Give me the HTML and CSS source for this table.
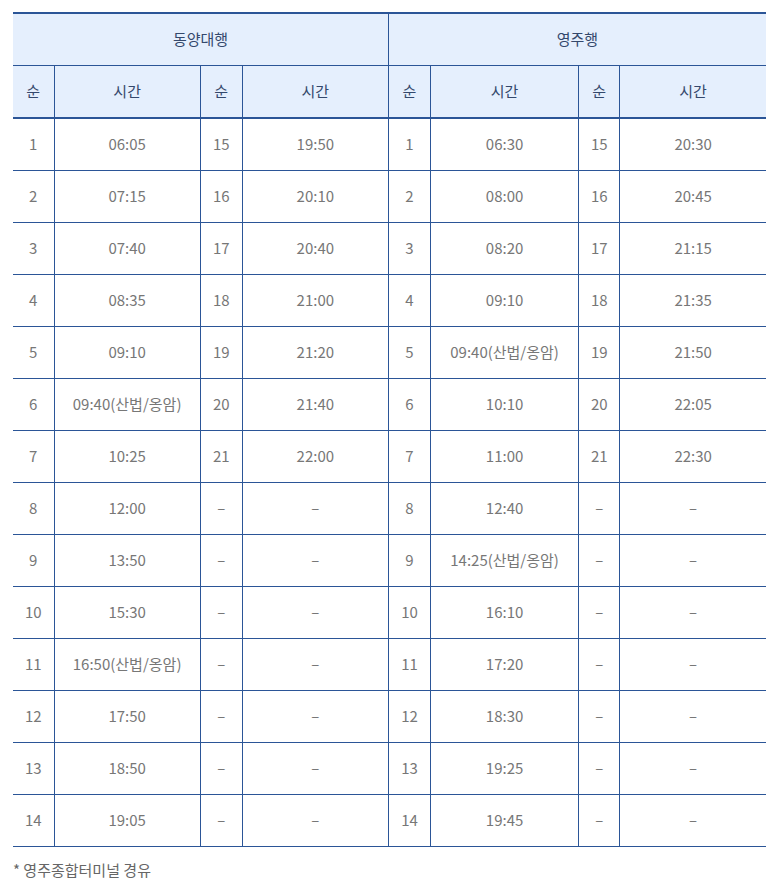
FILE: index.html
```html
<!DOCTYPE html>
<html lang="ko">
<head>
<meta charset="utf-8">
<title>시간표</title>
<link rel="stylesheet" href="styles.css">
</head>
<body>
<div class="wrap">
<table class="tt">
  <colgroup>
    <col class="c-no"><col class="c-time"><col class="c-no2"><col class="c-time">
    <col class="c-no2"><col class="c-time2"><col class="c-no"><col class="c-time">
  </colgroup>
  <thead>
    <tr class="h1">
      <th colspan="4">동양대행</th>
      <th colspan="4" class="split">영주행</th>
    </tr>
    <tr class="h2">
      <th class="first">순</th><th>시간</th><th>순</th><th>시간</th>
      <th>순</th><th>시간</th><th>순</th><th class="last">시간</th>
    </tr>
  </thead>
  <tbody>
    <tr><td class="first">1</td><td>06:05</td><td>15</td><td>19:50</td><td>1</td><td>06:30</td><td>15</td><td class="last">20:30</td></tr>
    <tr><td class="first">2</td><td>07:15</td><td>16</td><td>20:10</td><td>2</td><td>08:00</td><td>16</td><td class="last">20:45</td></tr>
    <tr><td class="first">3</td><td>07:40</td><td>17</td><td>20:40</td><td>3</td><td>08:20</td><td>17</td><td class="last">21:15</td></tr>
    <tr><td class="first">4</td><td>08:35</td><td>18</td><td>21:00</td><td>4</td><td>09:10</td><td>18</td><td class="last">21:35</td></tr>
    <tr><td class="first">5</td><td>09:10</td><td>19</td><td>21:20</td><td>5</td><td>09:40(산법/옹암)</td><td>19</td><td class="last">21:50</td></tr>
    <tr><td class="first">6</td><td>09:40(산법/옹암)</td><td>20</td><td>21:40</td><td>6</td><td>10:10</td><td>20</td><td class="last">22:05</td></tr>
    <tr><td class="first">7</td><td>10:25</td><td>21</td><td>22:00</td><td>7</td><td>11:00</td><td>21</td><td class="last">22:30</td></tr>
    <tr><td class="first">8</td><td>12:00</td><td>–</td><td>–</td><td>8</td><td>12:40</td><td>–</td><td class="last">–</td></tr>
    <tr><td class="first">9</td><td>13:50</td><td>–</td><td>–</td><td>9</td><td>14:25(산법/옹암)</td><td>–</td><td class="last">–</td></tr>
    <tr><td class="first">10</td><td>15:30</td><td>–</td><td>–</td><td>10</td><td>16:10</td><td>–</td><td class="last">–</td></tr>
    <tr><td class="first">11</td><td>16:50(산법/옹암)</td><td>–</td><td>–</td><td>11</td><td>17:20</td><td>–</td><td class="last">–</td></tr>
    <tr><td class="first">12</td><td>17:50</td><td>–</td><td>–</td><td>12</td><td>18:30</td><td>–</td><td class="last">–</td></tr>
    <tr><td class="first">13</td><td>18:50</td><td>–</td><td>–</td><td>13</td><td>19:25</td><td>–</td><td class="last">–</td></tr>
    <tr><td class="first">14</td><td>19:05</td><td>–</td><td>–</td><td>14</td><td>19:45</td><td>–</td><td class="last">–</td></tr>
  </tbody>
</table>
<p class="note">* 영주종합터미널 경유</p>
</div>
</body>
</html>
```
FILE: styles.css
```css
html, body {
  margin: 0;
  padding: 0;
  background: #fff;
}
body {
  font-family: "Noto Sans CJK KR", "Noto Sans", sans-serif;
  font-feature-settings: "locl" 0;
  font-size: 15px;
  color: #777;
}
.wrap {
  padding: 12px 14px 0 13px;
}
.tt {
  width: 753px;
  border-collapse: collapse;
  table-layout: fixed;
  border-top: 2px solid #2b5597;
}
.c-no { width: 41px; }
.c-no2 { width: 42px; }
.c-time { width: 146px; }
.c-time2 { width: 148px; }
.tt th,
.tt td {
  border: 1px solid #2b5597;
  text-align: center;
  padding: 0;
  line-height: 20px;
}
.tt th {
  background: #e5effd;
  color: #34486c;
  font-weight: 400;
  height: 50px;
  padding-bottom: 1px;
}
.tt td {
  height: 50px;
  padding-bottom: 1px;
  color: #777;
}
.tt .first { border-left: none; }
.tt .last { border-right: none; }
.tt .h1 th { border-left: none; border-right: none; }
.tt .h1 th.split { border-left: 1px solid #2b5597; }
.tt .h2 th { border-bottom: 2px solid #2b5597; }
.note {
  margin: 11px 0 0;
  line-height: 24px;
  color: #666;
}
```
